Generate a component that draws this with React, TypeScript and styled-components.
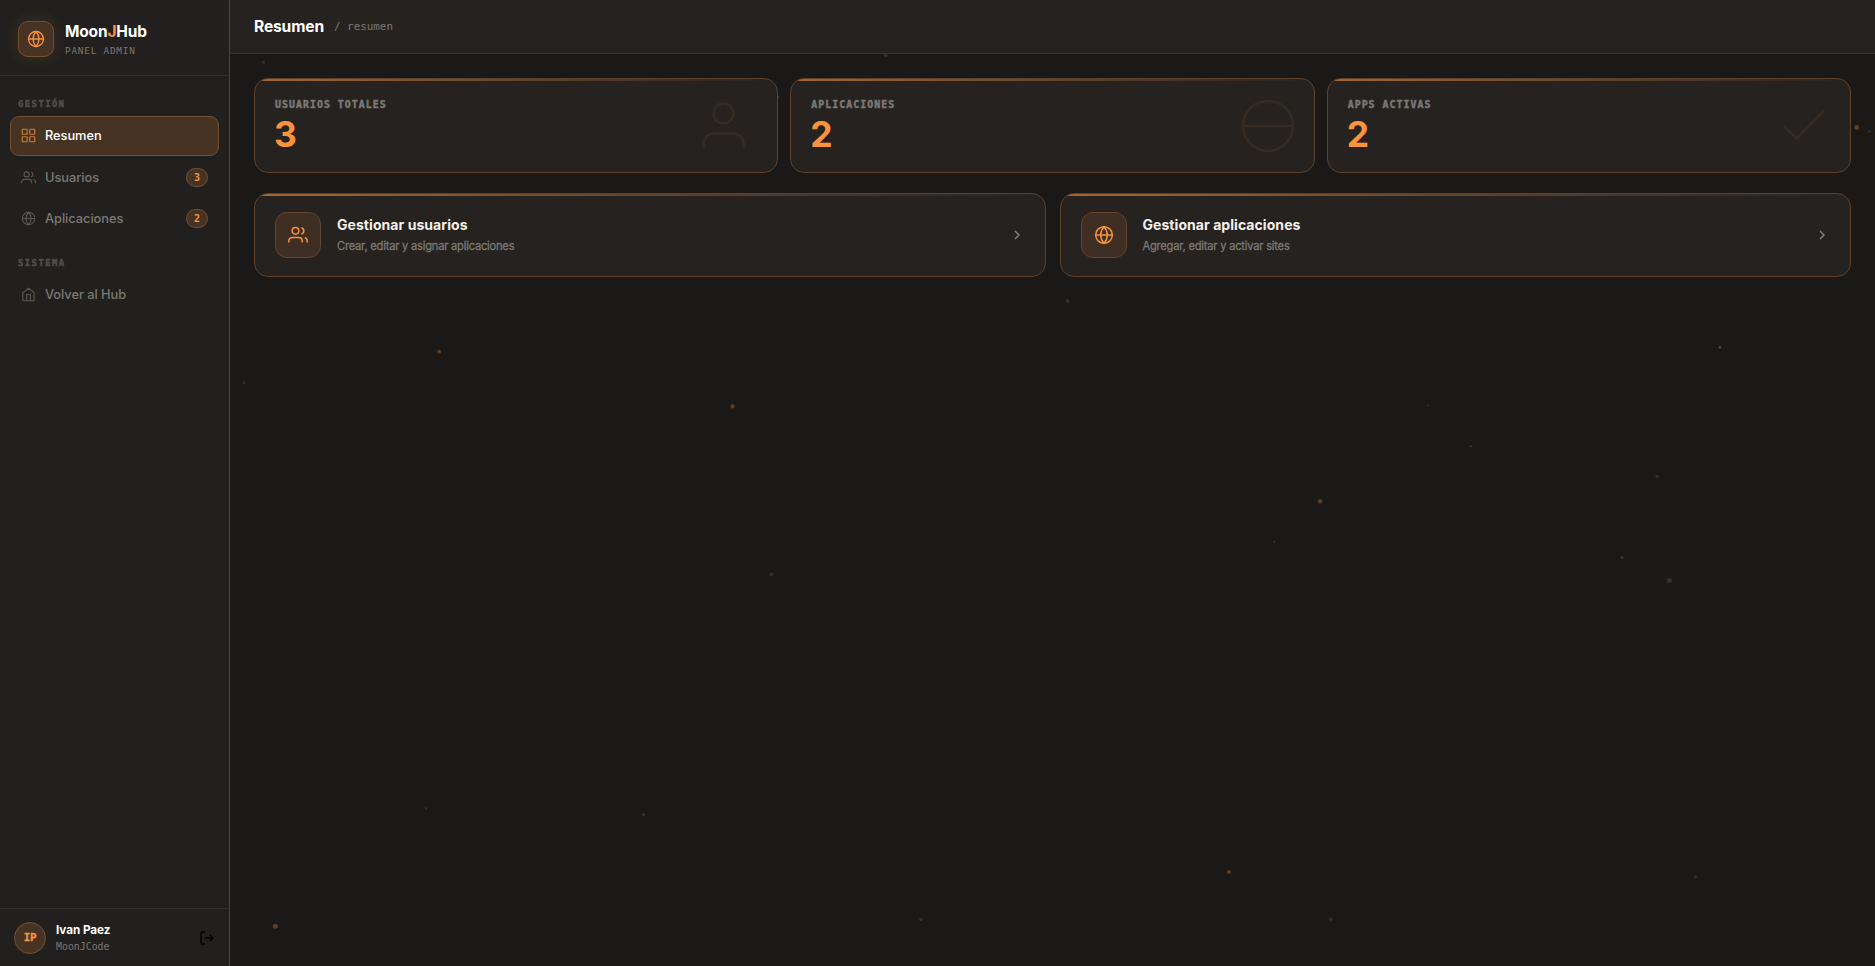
import React from "react";
import styled, { createGlobalStyle, css } from "styled-components";

const c = {
  bg: "#1a1917",
  side: "#21201e",
  card: "#262220",
  orange: "#f9943d",
  edge: "#5e4128",
  line: "#31302e",
  text: "#f5f0e8",
  muted: "#7b7874",
  dim: "#504e4b",
};
const sans = `"Inter", "Liberation Sans", sans-serif`;
const mono = `"DejaVu Sans Mono", "Liberation Mono", monospace`;

const Global = createGlobalStyle`
  *, *::before, *::after { box-sizing: border-box; }
  body { margin: 0; background: ${c.bg}; color: ${c.text}; font-family: ${sans}; overflow: hidden; }
  svg { display: block; flex: none; }
`;

const Shell = styled.div`
  display: grid;
  grid-template-columns: 230px 1fr;
  height: 100vh;
  min-height: 600px;
  position: relative;
`;
const Sky = styled.svg`
  position: absolute;
  inset: 0;
  pointer-events: none;
`;
const Sidebar = styled.aside`
  position: relative;
  display: flex;
  flex-direction: column;
  background: ${c.side};
  border-right: 1px solid ${c.edge};
`;
const Brand = styled.header`
  display: flex;
  align-items: center;
  gap: 11px;
  height: 76px;
  padding: 21px 18px 18px;
  border-bottom: 1px solid ${c.line};
`;
const LogoBox = styled.div`
  display: grid;
  place-items: center;
  width: 36px;
  height: 36px;
  border-radius: 10px;
  color: ${c.orange};
  background: #463324;
  border: 1px solid #75502f;
  box-shadow: 0 0 16px rgba(251, 146, 60, 0.15);
`;
const BrandName = styled.div`
  font-size: 15.5px;
  font-weight: 700;
  line-height: 20px;
  letter-spacing: -0.17px;
  color: #fff;
  em { font-style: normal; color: ${c.orange}; }
`;
const BrandSub = styled.div`
  font: 400 9.3px/13px ${mono};
  letter-spacing: 0.82px;
  margin-top: 2px;
  color: ${c.muted};
`;
const Nav = styled.nav`
  flex: 1;
  display: flex;
  flex-direction: column;
  gap: 2px;
  padding: 20px 10px;
`;
const Section = styled.div<{ $spaced?: boolean }>`
  font: 700 8.8px/16px ${mono};
  letter-spacing: 1.5px;
  -webkit-text-stroke: 0.5px;
  color: ${c.dim};
  padding-left: 8px;
  height: 18px;
  margin-top: ${(p) => (p.$spaced ? "15px" : "0")};
`;
const NavItem = styled.a<{ $active?: boolean }>`
  display: flex;
  align-items: center;
  gap: 9px;
  height: 39px;
  padding: 0 10px;
  border: 1px solid transparent;
  border-radius: 9px;
  font-size: 12.8px;
  font-weight: 500;
  letter-spacing: -0.03px;
  color: ${c.muted};
  svg { color: #595754; }
  ${(p) =>
    p.$active &&
    css`
      height: 40px;
      padding-bottom: 1px;
      color: #fff;
      background: #463324;
      border-color: #75502f;
      svg { color: #cb7b39; }
    `}
`;
const Count = styled.span`
  margin-left: auto;
  display: grid;
  place-items: center;
  width: 22px;
  height: 19px;
  border-radius: 10px;
  font: 700 10px/1 ${mono};
  color: ${c.orange};
  background: #463324;
  border: 1px solid #75502f;
`;
const UserBar = styled.footer`
  display: flex;
  align-items: center;
  gap: 10px;
  height: 58px;
  padding: 0 14px;
  border-top: 1px solid ${c.line};
`;
const Avatar = styled.div`
  display: grid;
  place-items: center;
  width: 32px;
  height: 32px;
  border-radius: 50%;
  font: 700 10.8px/1 ${mono};
  letter-spacing: -0.3px;
  -webkit-text-stroke: 0.3px;
  padding-top: 1px;
  color: ${c.orange};
  background: #463324;
  border: 1px solid #75502f;
`;
const UserName = styled.div`
  font-size: 11.7px;
  font-weight: 700;
  line-height: 17px;
  letter-spacing: -0.03px;
  color: #fff;
`;
const UserOrg = styled.div`
  font: 400 9.9px/13px ${mono};
  margin-top: 1px;
  color: ${c.muted};
`;
const Logout = styled.button`
  margin-left: auto;
  padding: 0;
  border: 0;
  background: none;
  color: #000;
`;

const Main = styled.main`
  position: relative;
  display: flex;
  flex-direction: column;
`;
const Topbar = styled.header`
  display: flex;
  align-items: center;
  height: 54px;
  padding: 0 24px;
  background: ${c.card};
  border-bottom: 1px solid #353331;
`;
const Title = styled.h1`
  margin: 0;
  font-size: 15.6px;
  font-weight: 700;
  letter-spacing: -0.15px;
  color: #fff;
`;
const Crumb = styled.span`
  margin: 1px 0 0 10px;
  font: 400 10.9px/1 ${mono};
  color: ${c.muted};
`;
const Content = styled.div`
  display: flex;
  flex-direction: column;
  gap: 20px;
  padding: 24px;
`;
const Row = styled.div<{ $cols: number; $gap: number }>`
  display: grid;
  grid-template-columns: repeat(${(p) => p.$cols}, 1fr);
  gap: ${(p) => p.$gap}px;
`;
const Card = styled.section`
  position: relative;
  display: flex;
  overflow: hidden;
  background: ${c.card};
  border: 1px solid ${c.edge};
  border-radius: 14px;
  &::before {
    content: "";
    position: absolute;
    inset: 0 0 auto 0;
    height: 2px;
    background: linear-gradient(90deg, ${c.orange}, transparent);
    opacity: 0.6;
  }
`;
const StatCard = styled(Card)`
  height: 95px;
  padding: 18px 16px 0 20px;
  justify-content: space-between;
`;
const StatLabel = styled.div`
  font: 700 9.9px/16px ${mono};
  letter-spacing: 1.04px;
  -webkit-text-stroke: 0.5px;
  color: ${c.muted};
`;
const StatValue = styled.div`
  font-size: 35.5px;
  font-weight: 700;
  line-height: 40px;
  margin: 2px 0 0 -1px;
  color: ${c.orange};
`;
const Watermark = styled.svg`
  margin-top: -1px;
  color: #f5a04a;
  opacity: 0.07;
`;
const LinkCard = styled(Card)`
  align-items: center;
  gap: 16px;
  height: 84px;
  padding: 0 20px;
`;
const IconBox = styled.div`
  display: grid;
  place-items: center;
  width: 46px;
  height: 46px;
  border-radius: 12px;
  color: ${c.orange};
  background: #3f2e23;
  border: 1px solid #65452b;
`;
const LinkTitle = styled.div`
  font-size: 14px;
  font-weight: 700;
  line-height: 20px;
  letter-spacing: 0.06px;
  margin-top: -2px;
`;
const LinkText = styled.div`
  font-size: 11.1px;
  line-height: 16px;
  margin-top: 3px;
  letter-spacing: -0.2px;
  -webkit-text-stroke: 0.3px;
  color: ${c.muted};
`;
const Arrow = styled.div`
  margin-left: auto;
  color: #8a8783;
`;

type IconName = "globe" | "grid" | "users" | "home" | "logout" | "chevron";
const shapes: Record<IconName, React.ReactNode> = {
  globe: (
    <>
      <circle cx="12" cy="12" r="10" />
      <path d="M2 12h20M12 2a15.3 15.3 0 0 1 4 10 15.3 15.3 0 0 1-4 10 15.3 15.3 0 0 1-4-10 15.3 15.3 0 0 1 4-10z" />
    </>
  ),
  grid: (
    <>
      <rect x="2" y="2" width="8" height="8" rx="1" />
      <rect x="14" y="2" width="8" height="8" rx="1" />
      <rect x="14" y="14" width="8" height="8" rx="1" />
      <rect x="2" y="14" width="8" height="8" rx="1" />
    </>
  ),
  users: (
    <>
      <path d="M17 21v-2a4 4 0 0 0-4-4H5a4 4 0 0 0-4 4v2" />
      <circle cx="9" cy="7" r="4" />
      <path d="M23 21v-2a4 4 0 0 0-3-3.87M16 3.13a4 4 0 0 1 0 7.75" />
    </>
  ),
  home: <path d="M3 9l9-7 9 7v11a2 2 0 0 1-2 2H5a2 2 0 0 1-2-2zM9 22V12h6v10" />,
  logout: <path d="M9 21H5a2 2 0 0 1-2-2V5a2 2 0 0 1 2-2h4M16 17l5-5-5-5M21 12H9" />,
  chevron: <path d="M9 18l6-6-6-6" />,
};
const Icon = ({ name, size, weight = 1.8 }: { name: IconName; size: number; weight?: number }) => (
  <svg width={size} height={size} viewBox="0 0 24 24" fill="none" stroke="currentColor" strokeWidth={weight} overflow="visible">
    {shapes[name]}
  </svg>
);

// x, y, radius, warm
const particles: [number, number, number, boolean][] = [
  [439.2, 351.7, 1.9, true], [244.1, 382.8, 1.4, false], [732.6, 406.4, 2.1, true],
  [771.3, 574.4, 1.8, false], [426.1, 808.5, 1.2, false], [643.7, 814.6, 1.7, false],
  [275.3, 926.3, 2.5, true], [920.9, 919.6, 1.7, false], [1067.7, 301, 1.9, false],
  [1720, 347.4, 1.4, true], [1428.2, 405.5, 1, false], [1470.8, 446.2, 1.2, false],
  [1657.1, 476.4, 1.7, false], [1320.1, 501.3, 2.2, true], [1274.3, 542, 1, false],
  [1622, 557.3, 1.6, false], [1669.4, 580.5, 2.5, false], [1229, 871.9, 1.9, true],
  [1695.5, 876.7, 1.5, false], [1330.7, 919.1, 1.8, false], [263.5, 62.3, 1.5, false],
  [885.8, 55, 2, false], [1856.7, 127.5, 2.4, true], [1869.3, 131.5, 1.3, false],
  [777.4, 97.3, 1.4, true],
];
const links = [
  [1428.2, 405.5, 1470.8, 446.2],
  [1320.1, 501.3, 1274.3, 542],
  [1622, 557.3, 1669.4, 580.5],
  [1856.7, 127.5, 1869.3, 131.5],
];

export default function App() {
  return (
    <>
      <Global />
      <Shell>
        <Sky width="100%" height="100%">
          {links.map(([x1, y1, x2, y2]) => (
            <line key={x1} x1={x1} y1={y1} x2={x2} y2={y2} stroke="#1f1e1c" strokeWidth="0.7" />
          ))}
          {particles.map(([x, y, r, warm]) => (
            <circle key={`${x}-${y}`} cx={x} cy={y} r={r} fill={warm ? "#5f3e22" : "#333231"} />
          ))}
        </Sky>
        <Sidebar>
          <Brand>
            <LogoBox><Icon name="globe" size={18} /></LogoBox>
            <div>
              <BrandName>Moon<em>J</em>Hub</BrandName>
              <BrandSub>PANEL ADMIN</BrandSub>
            </div>
          </Brand>
          <Nav>
            <Section>GESTIÓN</Section>
            <NavItem $active><Icon name="grid" size={15} />Resumen</NavItem>
            <NavItem><Icon name="users" size={15} />Usuarios<Count>3</Count></NavItem>
            <NavItem><Icon name="globe" size={15} />Aplicaciones<Count>2</Count></NavItem>
            <Section $spaced>SISTEMA</Section>
            <NavItem><Icon name="home" size={15} />Volver al Hub</NavItem>
          </Nav>
          <UserBar>
            <Avatar>IP</Avatar>
            <div>
              <UserName>Ivan Paez</UserName>
              <UserOrg>MoonJCode</UserOrg>
            </div>
            <Logout aria-label="Salir"><Icon name="logout" size={16} weight={2} /></Logout>
          </UserBar>
        </Sidebar>
        <Main>
          <Topbar>
            <Title>Resumen</Title>
            <Crumb>/ resumen</Crumb>
          </Topbar>
          <Content>
            <Row $cols={3} $gap={12}>
              <StatCard>
                <div><StatLabel>USUARIOS TOTALES</StatLabel><StatValue>3</StatValue></div>
                <Watermark width="60" height="60" viewBox="0 0 24 24" fill="none" stroke="currentColor" strokeWidth="1">
                  <path d="M17 21v-2a4 4 0 0 0-4-4H5a4 4 0 0 0-4 4v2" /><circle cx="9" cy="7" r="4" />
                </Watermark>
              </StatCard>
              <StatCard>
                <div><StatLabel>APLICACIONES</StatLabel><StatValue>2</StatValue></div>
                <Watermark width="60" height="60" viewBox="0 0 24 24" fill="none" stroke="currentColor" strokeWidth="1">
                  <circle cx="12" cy="12" r="10" /><path d="M2 12h20" />
                </Watermark>
              </StatCard>
              <StatCard>
                <div><StatLabel>APPS ACTIVAS</StatLabel><StatValue>2</StatValue></div>
                <Watermark width="60" height="60" viewBox="0 0 24 24" fill="none" stroke="currentColor" strokeWidth="1">
                  <path d="M20 6 9 17l-5-5" />
                </Watermark>
              </StatCard>
            </Row>
            <Row $cols={2} $gap={14}>
              <LinkCard>
                <IconBox><Icon name="users" size={20} /></IconBox>
                <div>
                  <LinkTitle>Gestionar usuarios</LinkTitle>
                  <LinkText>Crear, editar y asignar aplicaciones</LinkText>
                </div>
                <Arrow><Icon name="chevron" size={16} weight={2} /></Arrow>
              </LinkCard>
              <LinkCard>
                <IconBox><Icon name="globe" size={20} /></IconBox>
                <div>
                  <LinkTitle>Gestionar aplicaciones</LinkTitle>
                  <LinkText>Agregar, editar y activar sites</LinkText>
                </div>
                <Arrow><Icon name="chevron" size={16} weight={2} /></Arrow>
              </LinkCard>
            </Row>
          </Content>
        </Main>
      </Shell>
    </>
  );
}
